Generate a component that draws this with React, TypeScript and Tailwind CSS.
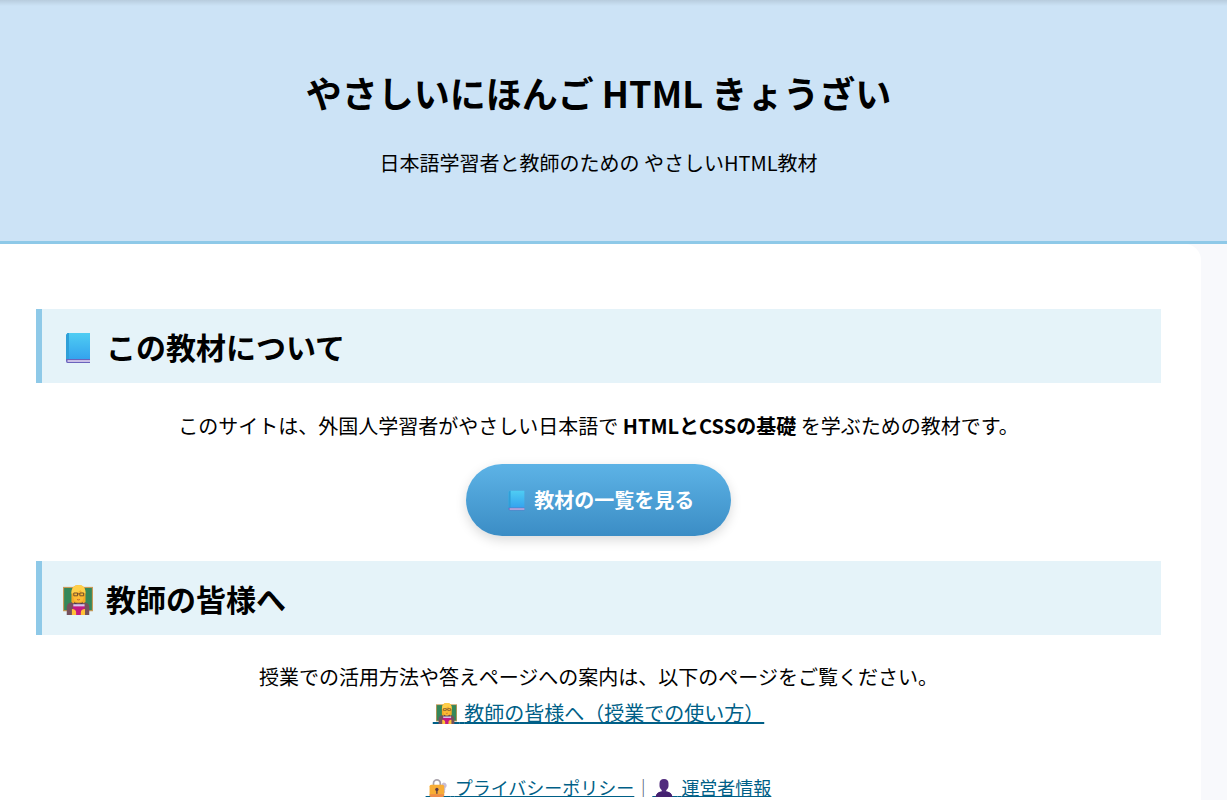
import type { ReactNode } from "react";

// ─── Icons ─────────────────────────────────────────────────────────────────

function BookIcon({ className }: { className: string }) {
    return (
        <svg viewBox="0 0 32 32" className={className} aria-hidden="true">
            <defs>
                <linearGradient id="book-cover" x1="0" y1="0" x2="0" y2="1">
                    <stop offset="0" stopColor="#4fcdf3" />
                    <stop offset="1" stopColor="#34a3ee" />
                </linearGradient>
            </defs>
            <path d="M4 3 5.500 1H28v26H4z" fill="url(#book-cover)" />
            <path d="M4 3 5.500 1H7v26H4z" fill="#2f9fd8" />
            <path d="M4 27h24v4H5.500Q4 31 4 29z" fill="#6a63bd" />
            <path d="M5.500 28.200H28v1.600H5.500z" fill="#e3d6f2" />
        </svg>
    );
}

function TeacherIcon({ className }: { className: string }) {
    return (
        <svg viewBox="0 0 32 32" className={className} aria-hidden="true">
            <path d="M0 2h32v26H0z" fill="#c99a58" />
            <path d="M1.200 3.200h29.600v23.600H1.200z" fill="#35875a" />
            <path d="M4 32v-8q0-5 6-5.500h12q6 .5 6 5.500v8z" fill="#76505c" />
            <path d="M9 18V8q0-8 7.500-8T24 8v10q-3 2-5 1h-5q-3 1-5-1z" fill="#f3a927" />
            <path d="M11 7h11v6q-.5 5.500-5.500 5.500T11 13z" fill="#fdbb35" />
            <path d="M9 9q0-9 8-9 7 0 7 9-4-1-5.500-3.500Q15 9 9 9z" fill="#ffcf4a" />
            <g fill="none" stroke="#6e4c2c" strokeWidth="1">
                <path d="M11.500 8.500h4v3h-4zM18 8.500h4v3h-4zM15.500 9.500H18" />
            </g>
            <path d="M15 15.500q1.500.8 3 0" fill="none" stroke="#b65a32" />
            <path d="m12 18 4.500 3 4.500-3v5h-9z" fill="#4a3c4c" />
            <path d="M10.500 21.500h12.500V32H10.500z" fill="#c31982" />
            <path d="M11 20.500h12v2.300H11z" fill="#dac5ed" />
            <path d="M9.500 25.500q4.500 0 4.500 4V32H9.500zm14 0q-4.500 0-4.500 4V32h4.500z" fill="#ffc138" />
        </svg>
    );
}

function LockIcon({ className }: { className: string }) {
    return (
        <svg viewBox="0 0 32 32" className={className} aria-hidden="true">
            <path
                d="M26 6a5.500 5.500 0 0 1 3 10v3l-1 2 1 2-2.500 3-2-2V16a5.500 5.500 0 0 1 1.500-10"
                fill="#c8bdd5"
            />
            <path d="M8 13V7.500a6 6 0 0 1 12 0V13" fill="none" stroke="#aaa4ad" strokeWidth="3" />
            <rect x="1" y="10" width="26" height="22" rx="3" fill="#f8ad36" />
            <path d="M1 27h26q0 5-3 5H4q-3 0-3-5" fill="#ee8d4a" />
            <circle cx="14" cy="18.500" r="3" fill="#5d3b45" />
            <path d="M12.800 19h2.400v7h-2.400z" fill="#5d3b45" />
        </svg>
    );
}

function PersonIcon({ className }: { className: string }) {
    return (
        <svg viewBox="0 0 32 32" className={className} aria-hidden="true">
            <path
                d="M8 8q0-8 8-8t8 8v5q0 4-4 7v2q10 1 11 10H1q1-9 11-10v-2q-4-3-4-7z"
                fill="#512b7d"
            />
            <path d="M1 32q1-9 11-10 4 3 8 0 10 1 11 10z" fill="#442170" />
        </svg>
    );
}

// ─── Building blocks ───────────────────────────────────────────────────────

// The full-width space carries the link's underline beneath the icon.
function InlineIcon({ small = false, children }: { small?: boolean; children: ReactNode }) {
    return (
        <span className={small ? "relative text-[25px] leading-none" : "relative text-[27px] leading-none"}>
            {"\u3000"}
            {children}
        </span>
    );
}

function SectionHeading({ icon, children }: { icon: ReactNode; children: ReactNode }) {
    return (
        <h2 className="flex items-center gap-3 border-l-6 border-[#8ec9e8] bg-[#e5f3f9] py-2.5 pl-5 text-[30px] leading-[54px] font-bold">
            {icon}
            <span>{children}</span>
        </h2>
    );
}

const linkClass = "text-[#005f87] underline hover:text-[#003f5c]";

// ─── Page ──────────────────────────────────────────────────────────────────

export default function App() {
    return (
        <div
            lang="ja"
            className="min-h-screen bg-[#f8f9fc] font-['Noto_Sans_CJK_JP',sans-serif] text-xl leading-9 text-black"
        >
            <header className="border-b-3 border-[#8ec9e8] bg-[#cce3f6] bg-linear-to-b from-black/10 to-transparent to-[6px] py-15 pr-[30px] text-center">
                <h1 className="mb-5 text-4xl leading-[65px] font-bold">
                    やさしいにほんご HTML きょうざい
                </h1>
                <p>日本語学習者と教師のための やさしいHTML教材</p>
            </header>

            <main className="mr-[26px] min-h-[556px] rounded-tr-2xl bg-white pt-[65px] pr-10 pl-9">
                <section>
                    <SectionHeading icon={<BookIcon className="mt-1 size-8" />}>
                        この教材について
                    </SectionHeading>
                    <div className="py-[25px] text-center">
                        <p className="mb-5">
                            このサイトは、外国人学習者がやさしい日本語で <strong>HTMLとCSSの基礎</strong>{" "}
                            を学ぶための教材です。
                        </p>
                        <a
                            href="#lessons"
                            className="inline-block rounded-full bg-linear-to-b from-[#5db3e6] to-[#3b8dc5] px-[37px] py-[18px] align-top font-bold text-white shadow-[0_4px_12px_rgba(0,0,0,0.15)]"
                        >
                            <InlineIcon>
                                <BookIcon className="absolute bottom-[5px] left-[3px] size-[21px]" />
                            </InlineIcon>{" "}
                            教材の一覧を見る
                        </a>
                    </div>
                </section>

                <section>
                    <SectionHeading icon={<TeacherIcon className="mt-1 size-8 p-px" />}>
                        教師の皆様へ
                    </SectionHeading>
                    <p className="pt-6 text-center">
                        授業での活用方法や答えページへの案内は、以下のページをご覧ください。
                        <br />
                        <a href="#teachers" className={linkClass}>
                            <InlineIcon>
                                <TeacherIcon className="absolute bottom-[5px] left-[3px] size-[21px]" />
                            </InlineIcon>{" "}
                            教師の皆様へ（授業での使い方）
                        </a>
                    </p>
                </section>

                <nav className="pt-10 text-center text-lg leading-8">
                    <a href="#privacy" className={linkClass}>
                        <InlineIcon small>
                            <LockIcon className="absolute bottom-[5px] left-[3px] size-[18px]" />
                        </InlineIcon>{" "}
                        プライバシーポリシー
                    </a>
                    <span className="text-gray-600">｜</span>
                    <a href="#about" className={linkClass}>
                        <InlineIcon small>
                            <PersonIcon className="absolute bottom-[5px] left-[3px] size-[18px]" />
                        </InlineIcon>{" "}
                        運営者情報
                    </a>
                </nav>
            </main>
        </div>
    );
}
